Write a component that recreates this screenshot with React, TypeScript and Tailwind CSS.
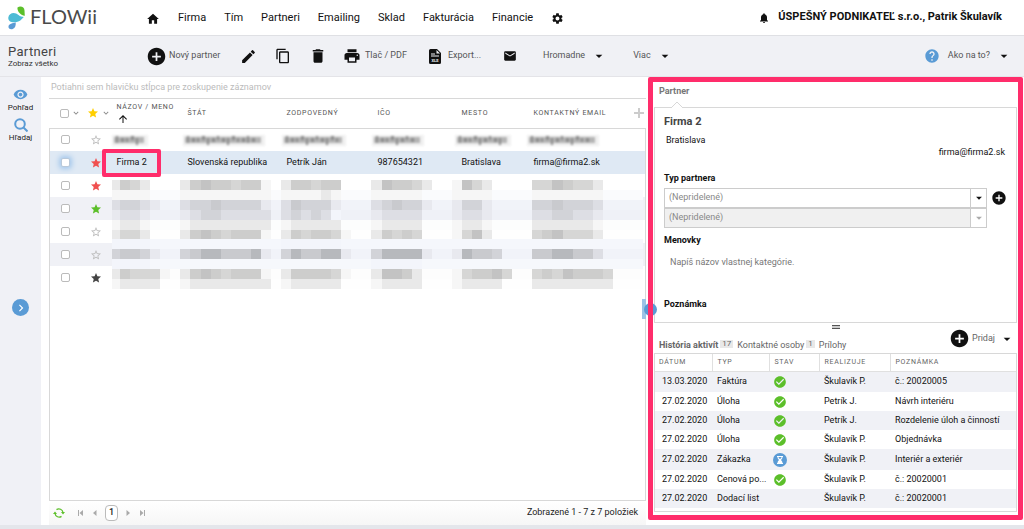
import { Fragment } from "react";
import {
  MdAddCircle,
  MdArrowDropDown,
  MdArrowUpward,
  MdCheckCircle,
  MdContentCopy,
  MdDelete,
  MdEdit,
  MdEmail,
  MdHelp,
  MdHome,
  MdKeyboardArrowDown,
  MdKeyboardArrowRight,
  MdNotifications,
  MdPrint,
  MdSettings,
  MdStar,
  MdStarBorder,
  MdVisibility,
} from "react-icons/md";

const menu = ["Firma", "Tím", "Partneri", "Emailing", "Sklad", "Fakturácia", "Financie"];

const columns = [
  { name: "Štát", width: "w-[99px]" },
  { name: "Zodpovedný", width: "w-[91px]" },
  { name: "IČO", width: "w-[84px]" },
  { name: "Mesto", width: "w-[72px]" },
];

const partners = [
  { star: "", row: "bg-white" },
  {
    star: "text-[#f0504f]",
    row: "bg-[#dfe9f4]",
    cells: ["Firma 2", "Slovenská republika", "Petrík Ján", "987654321", "Bratislava", "firma@firma2.sk"],
  },
  { star: "text-[#f0504f]", row: "bg-white" },
  { star: "text-[#5cbf2a]", row: "bg-[#f0f1f6]" },
  { star: "", row: "bg-white" },
  { star: "", row: "bg-[#f0f1f6]" },
  { star: "text-[#444]", row: "bg-white" },
];

const history = [
  { date: "13.03.2020", type: "Faktúra", state: "done", who: "Škulavík P.", note: "č.: 20020005" },
  { date: "27.02.2020", type: "Úloha", state: "done", who: "Petrík J.", note: "Návrh interiéru" },
  { date: "27.02.2020", type: "Úloha", state: "done", who: "Petrík J.", note: "Rozdelenie úloh a činností" },
  { date: "27.02.2020", type: "Úloha", state: "done", who: "Škulavík P.", note: "Objednávka" },
  { date: "27.02.2020", type: "Zákazka", state: "waiting", who: "Škulavík P.", note: "Interiér a exteriér" },
  { date: "27.02.2020", type: "Cenová po...", state: "done", who: "Škulavík P.", note: "č.: 20020001" },
  { date: "27.02.2020", type: "Dodací list", state: "", who: "Škulavík P.", note: "č.: 20020001" },
];

// Mosaic over the private rows: one entry per line of squares, 1-5 grey, a-f blue grey
const shades: Record<string, string> = {
  "1": "#f6f6f6",
  "2": "#e9e9e9",
  "3": "#d6d6d5",
  "4": "#cdcdcc",
  "5": "#c3c3c3",
  a: "#f3f5fb",
  b: "#e8e9ef",
  c: "#dddee4",
  d: "#d2d3d8",
  e: "#c9cace",
  f: "#b7b9bd",
};

const mosaic: { base: string; parts: [number, string][] }[] = [
  { base: "#ffffff", parts: [[0, "2432"], [7, "245443443"], [15, "1"], [17, "244344"], [26, "25443"], [31, "2"], [34, "1532"], [42, "3354332"]] },
  { base: "#fafbfd", parts: [[0, "1111"], [7, "111111111"], [17, "111121"], [26, "11111"], [34, "1111"], [42, "1111111"]] },
  { base: "#f1f3f9", parts: [[0, "cddcb"], [7, "cddeddddd"], [15, "b"], [17, "cedddb"], [26, "cdeddb"], [34, "bddb"], [42, "ddedddc"]] },
  { base: "#eff1f7", parts: [[0, "bccb"], [7, "bcddccccc"], [17, "cdcdca"], [26, "bcccc"], [34, "bccb"], [42, "ccddccb"]] },
  { base: "#fcfdfd", parts: [[0, "1221"], [7, "122222222"], [17, "122222"], [26, "12222"], [34, "1221"], [42, "2222221"]] },
  { base: "#fefefe", parts: [[0, "2332"], [7, "245434444"], [15, "1"], [17, "243443"], [23, "1"], [26, "24343"], [34, "1352"], [42, "3453332"]] },
  { base: "#f5f7fc", parts: [[0, "aaaa"], [17, "aaaaaa"]] },
  { base: "#f1f3f9", parts: [[0, "deedb"], [7, "deffeeeff"], [15, "b"], [17, "dfeeff"], [23, "b"], [26, "dffff"], [31, "b"], [34, "bfeed"], [42, "eeffeec"]] },
  { base: "#f6f8fc", parts: [[0, "aaaa"], [26, "aaaaa"]] },
  { base: "#fdfdfd", parts: [[0, "24333"], [5, "1"], [7, "245434444"], [15, "1"], [17, "244443"], [23, "1"], [26, "25542"], [34, "134453"], [42, "34354443"]] },
  { base: "#fefefe", parts: [[0, "12222"], [7, "122222222"], [17, "122222"], [26, "12222"], [34, "12222"], [42, "22222222"]] },
];

// Smeared words of the first row: start and length
const smears = [
  [6, 28],
  [77, 74],
  [176, 56],
  [266, 44],
  [349, 48],
  [421, 64],
];

function Mosaic() {
  return (
    <svg
      className="pointer-events-none absolute left-[61px] top-[51px] h-[109px] w-[533px]"
      viewBox="0 0 53 11"
      preserveAspectRatio="none"
      shapeRendering="crispEdges"
      aria-hidden="true"
    >
      {mosaic.map((line, y) => (
        <Fragment key={y}>
          <rect x={0.2} y={y} width={52.8} height={1} fill={line.base} />
          {line.parts.map(([start, text]) =>
            text.split("").map((shade, i) => (
              <rect
                key={start + i}
                x={start + i || 0.2}
                y={y}
                width={start + i ? 1 : 0.8}
                height={1}
                fill={shades[shade]}
              />
            ))
          )}
        </Fragment>
      ))}
    </svg>
  );
}

function Smear() {
  return (
    <svg
      className="pointer-events-none absolute left-[61px] top-[3px] h-4 w-[500px] blur-[1px]"
      viewBox="0 0 500 16"
      aria-hidden="true"
    >
      {smears.map(([start, length]) => (
        <g key={start}>
          <rect x={start - 4} y={3} width={length + 8} height={11} fill="#f0f0f0" />
          <rect x={start - 2} y={5} width={length + 2} height={6} fill="#b4b4b4" />
          {Array.from({ length: Math.floor(length / 5) }, (_, i) => (
            <rect key={i} x={start + i * 5} y={i % 3 ? 6 : 4} width={i % 2 ? 3 : 2} height={i % 4 ? 4 : 7} fill="#8b8b8b" />
          ))}
        </g>
      ))}
    </svg>
  );
}

function Logo() {
  return (
    <a href="#" className="flex w-[138px] items-center gap-1 pl-2 text-[#4a4a4a]">
      <svg className="h-6 w-[18px]" viewBox="0 0 18 24" aria-hidden="true">
        <path d="M9.500 1.500C12.500-.5 16.500 1 16.500 4.500c0 2 .3 3.500.3 5.200-3.500.2-8-4.200-7.300-8.200z" fill="#5cbf2a" />
        <path d="M.3 11.500C1 6.500 7 5.500 10.500 9c1.700 1.500 3.500 1.800 5.300 2-2.300 2.500-4.300 4.800-8 5.200C3.500 16.600 0 15.500.3 11.500z" fill="#4dbbd5" />
        <path d="M7.700 16.500c.3 2.800-.4 5.500-3 6.500-2.200.8-4.700-.6-4.200-2.800.4-2.300 4-3.200 7.200-3.700z" fill="#5a9bd5" />
      </svg>
      <span className="pb-1 font-[Lato,sans-serif] text-[20px] leading-6">FLOWii</span>
    </a>
  );
}

function XlsIcon() {
  return (
    <svg className="h-[15px] w-3" viewBox="0 0 12 15" aria-hidden="true">
      <path d="M1.500 0H8l4 4v9.500a1.500 1.500 0 0 1-1.500 1.500h-9A1.500 1.500 0 0 1 0 13.500v-12A1.500 1.500 0 0 1 1.500 0z" fill="#111" />
      <path d="M7.500 1v3.500H11zM2 4.500h4v1H2zM2 6.500h8v1H2z" fill="#f0f1f5" />
      <text x="6" y="12.500" fontSize="4" fontWeight="700" textAnchor="middle" fill="#f0f1f5">
        XLS
      </text>
    </svg>
  );
}

function WaitingIcon() {
  return (
    <svg className="-my-px size-[14px]" viewBox="0 0 14 14" aria-label="Čaká">
      <circle cx="7" cy="7" r="7" fill="#5a9bd5" />
      <path d="M4 3h6v1H9.500c0 1.500-.8 2.300-1.700 3 .9.700 1.700 1.500 1.700 3h.5v1H4v-1h.5c0-1.500.8-2.300 1.700-3-.9-.7-1.700-1.500-1.700-3H4z" fill="#fff" />
      <path d="M5.500 4h3c0 1-.6 1.500-1.500 2-.9-.5-1.500-1-1.500-2z" fill="#5a9bd5" />
    </svg>
  );
}

function RefreshIcon() {
  return (
    <svg className="size-3" viewBox="0 0 12 12" fill="none" stroke="#5cbf2a" strokeWidth="1.300" aria-hidden="true">
      <path d="M3.500 2.600A4.200 4.200 0 0 1 10 5.500M8.500 9.400A4.200 4.200 0 0 1 2 6.500" />
      <path d="M8 5h4l-2 2.500zM4 7H0l2-2.500z" fill="#5cbf2a" stroke="none" />
    </svg>
  );
}

function Toolbar() {
  return (
    <div className="flex h-10 items-center bg-[#f0f1f5] text-[9px] text-[#555]">
      <div className="w-[138px] pl-2">
        <h1 className="text-[13px] leading-4 tracking-wide text-[#444]">Partneri</h1>
        <p className="text-[8px] leading-2 text-[#333]">Zobraz všetko</p>
      </div>
      <button className="ml-2 flex w-[94px] items-center gap-0.5">
        <MdAddCircle className="size-[21px] text-[#111]" />
        Nový partner
      </button>
      <div className="flex items-center gap-[18px] text-[#111]">
        <button aria-label="Upraviť">
          <MdEdit className="size-[17px]" />
        </button>
        <button aria-label="Kopírovať">
          <MdContentCopy className="size-4" />
        </button>
        <button aria-label="Vymazať">
          <MdDelete className="size-[18px]" />
        </button>
      </div>
      <button className="ml-4 flex items-center gap-1">
        <MdPrint className="size-[18px] text-[#111]" />
        Tlač / PDF
      </button>
      <button className="ml-[22px] flex items-center gap-[7px]">
        <XlsIcon />
        Export...
      </button>
      <button className="ml-[22px] text-[#111]" aria-label="Email">
        <MdEmail className="size-[14px]" />
      </button>
      <button className="ml-[26px] flex items-center gap-1.5">
        Hromadne
        <MdArrowDropDown className="size-4 text-[#111]" />
      </button>
      <button className="ml-[26px] flex items-center gap-1.5">
        Viac
        <MdArrowDropDown className="size-4 text-[#111]" />
      </button>
      <button className="ml-auto mr-3 flex items-center">
        <MdHelp className="mr-2 size-4 text-[#5a9bd5]" />
        Ako na to?
        <MdArrowDropDown className="ml-1.5 size-4 text-[#111]" />
      </button>
    </div>
  );
}

function PartnerTable() {
  return (
    <table className="w-full table-fixed border-collapse text-left text-[9px] text-[#111]">
      <thead>
        <tr className="h-[29px] text-[7px] uppercase tracking-widest text-[#555]">
          <th className="w-8 p-0">
            <div className="flex items-center gap-0.5 pl-2.5">
              <input type="checkbox" aria-label="Označiť všetko" className="size-[9px] appearance-none rounded-xs border border-[#bbb]" />
              <MdKeyboardArrowDown className="size-[10px] shrink-0 text-[#888]" />
            </div>
          </th>
          <th className="w-[29px] p-0">
            <div className="flex items-center pl-[5px]">
              <MdStar className="size-3 shrink-0 text-[#ffcf00]" />
              <MdKeyboardArrowDown className="ml-0.5 size-[10px] shrink-0 text-[#888]" />
            </div>
          </th>
          <th className="w-[71px] p-0 pl-1.5 font-normal">
            <div className="whitespace-nowrap leading-3">Názov / Meno</div>
            <MdArrowUpward className="size-3 text-[#111]" />
          </th>
          {columns.map((column) => (
            <th key={column.name} className={`p-0 pl-1.5 font-normal ${column.width}`}>
              {column.name}
            </th>
          ))}
          <th className="p-0 pl-1.5 font-normal">
            <div className="flex items-center justify-between whitespace-nowrap pr-0.5">
              Kontaktný email
              <button aria-label="Pridať stĺpec">
                <svg className="size-[10px]" viewBox="0 0 10 10" aria-hidden="true">
                  <path d="M4 0h2v4h4v2H6v4H4V6H0V4h4z" fill="#ccc" />
                </svg>
              </button>
            </div>
          </th>
        </tr>
      </thead>
      <tbody className="border border-b-0 border-[#d8d8d8]">
        {partners.map((partner, i) => (
          <tr key={i} className={`h-[23px] ${partner.row}`}>
            <td className="p-0 pl-[11px]">
              <input
                type="checkbox"
                aria-label="Označiť riadok"
                className={`block size-[9px] appearance-none rounded-xs border bg-white ${
                  partner.cells ? "border-[#b9c9da] shadow-[0_0_5px_2px_#a5c8ec]" : "border-[#bbb]"
                }`}
              />
            </td>
            <td className="p-0 pl-2">
              {partner.star ? (
                <MdStar className={`size-3 ${partner.star}`} />
              ) : (
                <MdStarBorder className="size-3 text-[#bbb]" />
              )}
            </td>
            {partner.cells ? (
              partner.cells.map((cell) => (
                <td key={cell} className="whitespace-nowrap p-0 pl-1.5">
                  {cell}
                </td>
              ))
            ) : (
              <td colSpan={6} className="p-0" />
            )}
          </tr>
        ))}
      </tbody>
    </table>
  );
}

function Grid() {
  return (
    <main className="flex min-w-[597px] flex-1 flex-col pl-2">
      <p className="border-b border-[#d8d8d8] pl-0.5 text-[9px] leading-[21px] text-[#bbb]">
        Potiahni sem hlavičku stĺpca pre zoskupenie záznamov
      </p>
      <div className="flex flex-1 flex-col">
        <div className="relative">
          <PartnerTable />
          {/* everything over the rows hangs on this box, it starts under the column names */}
          <div className="pointer-events-none absolute left-0 top-[30px] w-full">
            <Mosaic />
            <Smear />
            <div className="absolute left-[53px] top-5 h-7 w-[59px] rounded-xs border-4 border-[#ff2d6b]" />
          </div>
        </div>
        <div className="flex-1 border border-t-0 border-[#d8d8d8]" />
      </div>
      <footer className="flex h-6 items-center bg-linear-to-b from-white to-[#f6f6f6] pl-1 pr-2 text-[9px] text-[#222]">
        <button aria-label="Obnoviť">
          <RefreshIcon />
        </button>
        <button className="ml-3" aria-label="Prvá strana">
          <svg className="h-[6px] w-2" viewBox="0 0 8 6" fill="#aaa">
            <path d="M1 0h1v6H1zM6 0v6L2.500 3z" />
          </svg>
        </button>
        <button className="ml-1.5" aria-label="Predošlá strana">
          <svg className="h-[6px] w-2" viewBox="0 0 8 6" fill="#aaa">
            <path d="M5.500 0v6L2 3z" />
          </svg>
        </button>
        <button className="ml-1.5 h-4 w-[13px] rounded-sm border border-[#bbb] bg-white font-medium">1</button>
        <button className="ml-1.5" aria-label="Ďalšia strana">
          <svg className="h-[6px] w-2" viewBox="0 0 8 6" fill="#aaa">
            <path d="M2.500 0v6L6 3z" />
          </svg>
        </button>
        <button className="ml-1.5" aria-label="Posledná strana">
          <svg className="h-[6px] w-2" viewBox="0 0 8 6" fill="#aaa">
            <path d="M6 0h1v6H6zM2 0v6l3.500-3z" />
          </svg>
        </button>
        <span className="ml-auto">Zobrazené 1 - 7 z 7 položiek</span>
      </footer>
    </main>
  );
}

function TypeSelect({ label, disabled }: { label: string; disabled?: boolean }) {
  return (
    <div className="relative h-5 w-[323px]">
      <select
        aria-label={label}
        disabled={disabled}
        className="h-5 w-full appearance-none border border-[#ccc] bg-white pl-1 text-[9px] text-[#888] opacity-100 disabled:bg-[#f0f0f0]"
      >
        <option>(Nepridelené)</option>
      </select>
      <span className="pointer-events-none absolute right-px top-px flex h-[18px] w-4 items-center justify-center border-l border-[#ccc] bg-white">
        <MdArrowDropDown className={disabled ? "size-[14px] text-[#aaa]" : "size-[14px] text-[#111]"} />
      </span>
    </div>
  );
}

function PartnerCard() {
  return (
    <section className="relative h-[216px] border border-[#d8d8d8] px-[9px] text-[9px] text-[#111]">
      <svg className="absolute -top-[7px] left-4 h-[7px] w-3" viewBox="0 0 12 7" aria-hidden="true">
        <path d="M0 7l6-6 6 6" fill="#fff" stroke="#d8d8d8" />
      </svg>
      <h2 className="pt-1.5 text-[11px] font-bold leading-4 text-[#444]">Firma 2</h2>
      <p className="mt-1 pl-0.5 leading-3">Bratislava</p>
      <a href="#" className="block pr-0.5 text-right leading-3">
        firma@firma2.sk
      </a>
      <h3 className="mt-3.5 font-bold leading-3">Typ partnera</h3>
      <div className="mt-1 flex gap-1">
        <div>
          <TypeSelect label="Typ partnera" />
          <TypeSelect label="Podtyp partnera" disabled />
        </div>
        <button className="flex h-5 items-center" aria-label="Pridať typ">
          <MdAddCircle className="size-4" />
        </button>
      </div>
      <label htmlFor="tags" className="mt-1.5 block font-bold leading-3">
        Menovky
      </label>
      <input
        id="tags"
        placeholder="Napíš názov vlastnej kategórie."
        className="mt-2 block h-4 w-full pl-1.5 placeholder:text-[#777]"
      />
      <h3 className="mt-7 font-bold leading-3">Poznámka</h3>
    </section>
  );
}

function Detail() {
  return (
    <aside className="relative mb-[5px] ml-0.5 mr-px flex w-[375px] shrink-0 flex-col px-1.5 pb-2">
      <div className="flex h-[30px] items-center pl-[5px] text-[9px] font-bold text-[#777]">Partner</div>
      <PartnerCard />
      <div className="flex h-[30px] items-start pl-[5px] text-[9px] text-[#666]">
        <div className="flex flex-1 items-center pt-4">
          <button className="font-bold leading-3">História aktivít</button>
          <span className="mb-0.5 ml-0.5 bg-[#e8e8e8] px-0.5 text-[8px] leading-2">17</span>
          <button className="ml-1 leading-3">Kontaktné osoby</button>
          <span className="mb-0.5 ml-0.5 bg-[#e8e8e8] px-0.5 text-[8px] leading-2">1</span>
          <button className="ml-1 leading-3">Prílohy</button>
        </div>
        <div className="absolute left-1/2 mt-[2px] h-1 w-2 -translate-x-1 border-y border-[#555] bg-[#ccc]" />
        <button className="mt-[5px] flex items-center gap-0.5">
          <MdAddCircle className="size-[21px] text-[#111]" />
          Pridaj
          <MdArrowDropDown className="ml-0.5 mr-0.5 size-4 text-[#111]" />
        </button>
      </div>
      <div className="flex-1 border border-[#d8d8d8]">
        <table className="w-full table-fixed text-left text-[9px] text-[#111]">
          <thead>
            <tr className="h-[17px] text-[7px] uppercase tracking-widest text-[#666]">
              <th className="w-[57px] border-b border-r border-[#e0e0e0] p-0 pl-1 font-normal">Dátum</th>
              <th className="w-[57px] border-b border-r border-[#e0e0e0] p-0 pl-[5px] font-normal">Typ</th>
              <th className="w-[50px] border-b border-r border-[#e0e0e0] p-0 pl-[5px] font-normal">Stav</th>
              <th className="w-[71px] border-b border-r border-[#e0e0e0] p-0 pl-[5px] font-normal">Realizuje</th>
              <th className="border-b border-[#e0e0e0] p-0 pl-[5px] font-normal">Poznámka</th>
            </tr>
          </thead>
          <tbody>
            {history.map((item, i) => (
              <tr key={i} className={`${i === 0 || i === 4 ? "h-[21px]" : "h-[19px]"} odd:bg-[#f0f1f6]`}>
                <td className="p-0 pl-[7px]">{item.date}</td>
                <td className="whitespace-nowrap p-0 pl-[5px]">{item.type}</td>
                <td className="p-0 pl-1">
                  {item.state === "done" && <MdCheckCircle className="size-[14px] text-[#5cbf2a]" aria-label="Hotovo" />}
                  {item.state === "waiting" && <WaitingIcon />}
                </td>
                <td className="p-0 pl-[5px]">{item.who}</td>
                <td className="whitespace-nowrap p-0 pl-[5px]">{item.note}</td>
              </tr>
            ))}
          </tbody>
        </table>
      </div>
      <div className="absolute -left-1.5 top-[222px] flex h-5 w-[15px] items-center overflow-hidden">
        <span className="h-5 w-1 shrink-0 bg-[#9cc3e6]" />
        <span className="-ml-0.5 size-[13px] shrink-0 rounded-full bg-[#5a9bd5]" />
      </div>
      <div className="pointer-events-none absolute inset-0 rounded-xs border-[5px] border-[#ff2d6b]" />
    </aside>
  );
}

export default function App() {
  return (
    <div className="flex min-h-screen flex-col bg-white font-[Roboto,sans-serif]">
      <header className="flex h-9 items-center border-b border-[#dfe0e4] text-[#111]">
        <Logo />
        <nav className="ml-2 flex items-center gap-[18px] pt-0.5 text-[11px]">
          <a href="#" aria-label="Domov">
            <MdHome className="size-[14px]" />
          </a>
          {menu.map((item) => (
            <a key={item} href="#">
              {item}
            </a>
          ))}
          <a href="#" aria-label="Nastavenia">
            <MdSettings className="size-[13px]" />
          </a>
        </nav>
        <div className="ml-auto mr-[22px] flex items-center gap-2 text-[11px] font-bold">
          <MdNotifications className="size-3" />
          ÚSPEŠNÝ PODNIKATEĽ s.r.o., Patrik Škulavík
        </div>
      </header>
      <Toolbar />
      <div className="flex flex-1 border-t border-[#e4e4e8]">
        <aside className="flex w-[41px] shrink-0 flex-col items-center bg-[#f0f1f6] pb-[54px] pt-2.5 text-[8px] text-[#222]">
          <button className="flex flex-col items-center">
            <MdVisibility className="size-[15px] text-[#5a9bd5]" />
            <span className="leading-3">Pohľad</span>
          </button>
          <button className="mt-1 flex flex-col items-center">
            <svg className="size-[14px]" viewBox="0 0 14 14" fill="none" stroke="#5a9bd5" strokeWidth="2" aria-hidden="true">
              <circle cx="6" cy="6" r="4.800" />
              <path d="M9.500 9.500l4 4" />
            </svg>
            <span className="leading-3">Hľadaj</span>
          </button>
          <button className="my-auto flex size-[17px] items-center justify-center rounded-full bg-[#5a9bd5] text-white" aria-label="Rozbaliť">
            <MdKeyboardArrowRight className="size-[14px]" />
          </button>
        </aside>
        <Grid />
        <Detail />
      </div>
      <div className="h-1 bg-[#e4e6eb]" />
    </div>
  );
}
